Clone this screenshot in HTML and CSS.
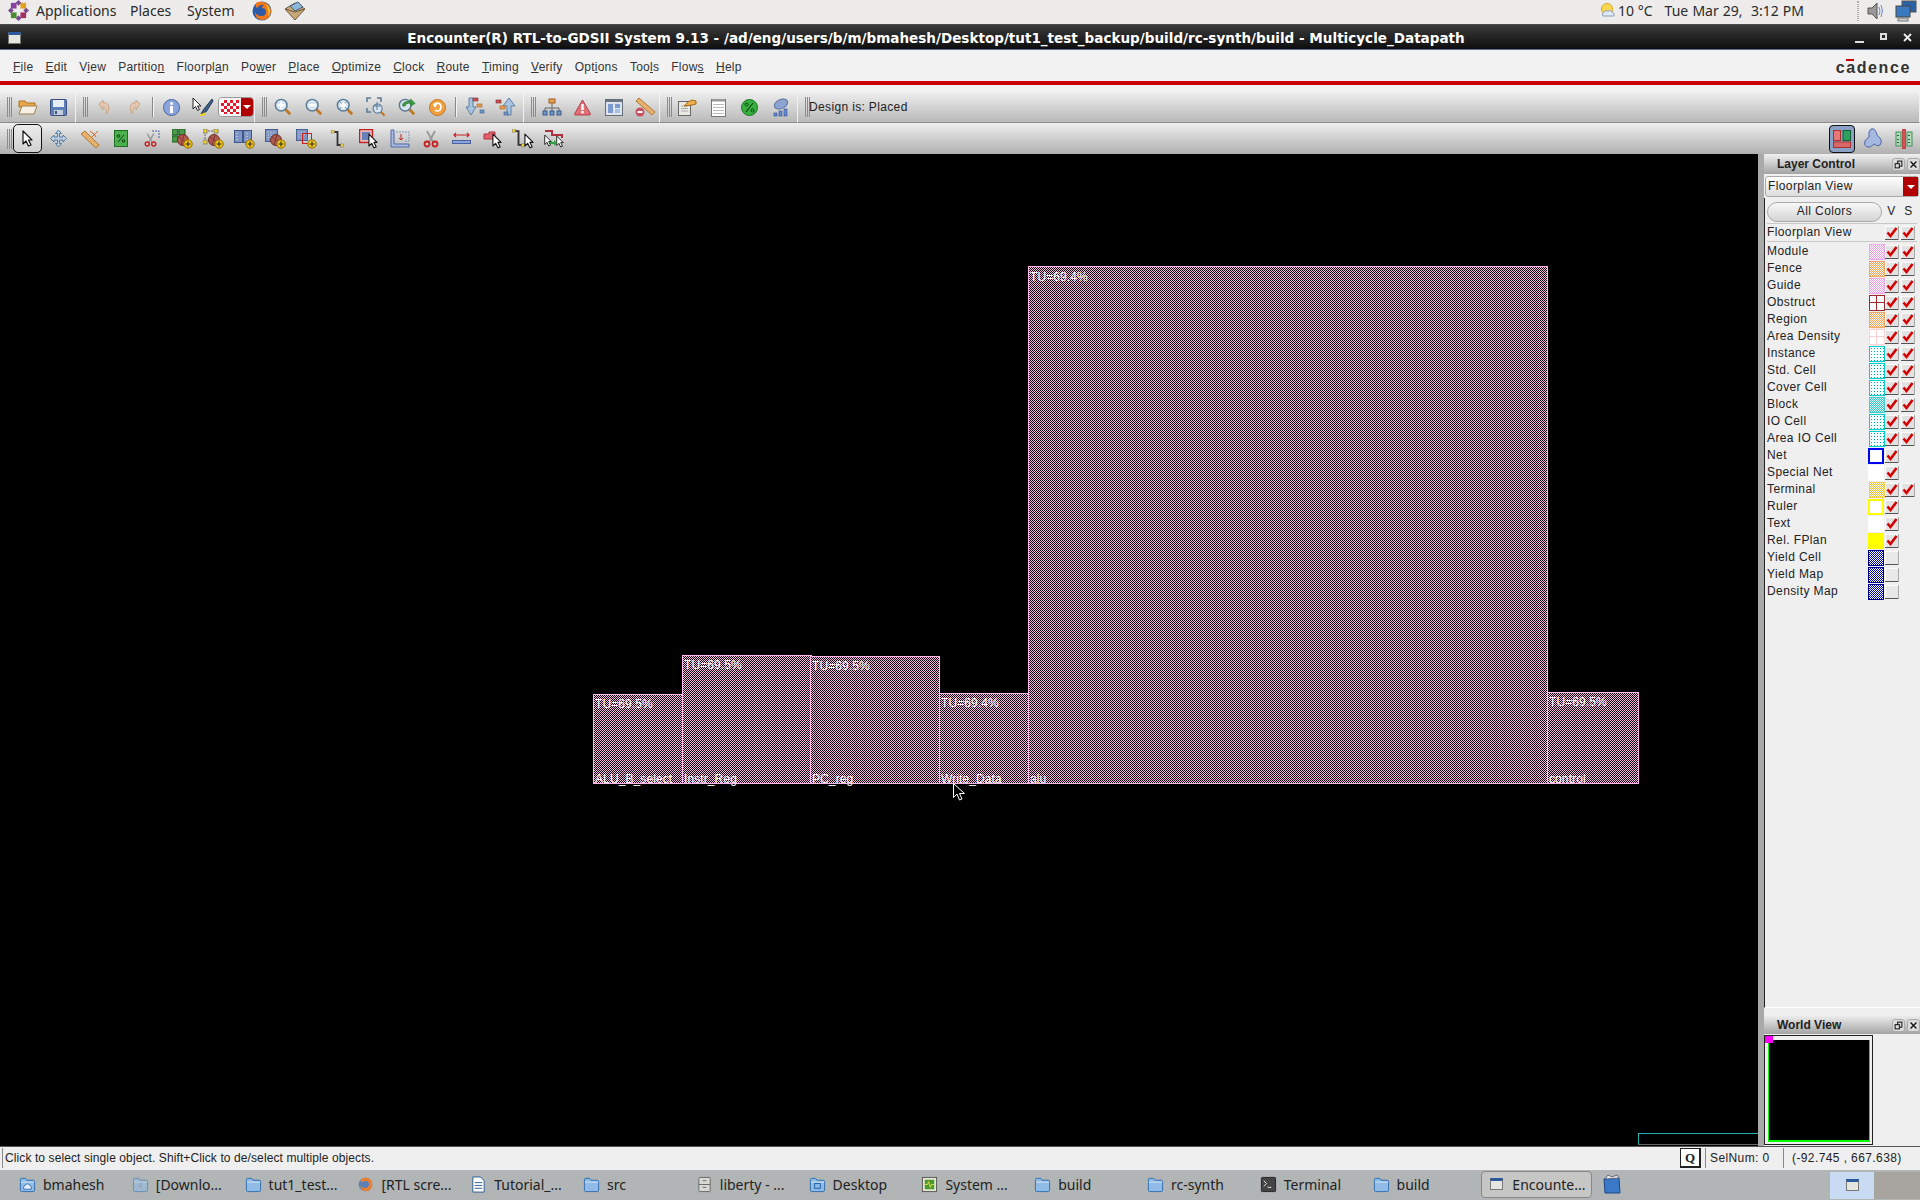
FILE: index.html
```html
<!DOCTYPE html>
<html lang="en">

<head>
    <meta charset="UTF-8">
    <title>Encounter(R) RTL-to-GDSII System 9.13</title>
    <link rel="stylesheet" href="styles.css">
</head>

<body>
    <svg class="defs" width="0" height="0">
        <defs>
            <symbol id="ptr" viewBox="0 0 11 17"><path d="M1 1v13l3-3 2.500 5 2.500-1-2.500-5H10z" fill="#fff" stroke="#111" stroke-width="1.200" stroke-linejoin="round"/></symbol>
            <symbol id="folder" viewBox="0 0 18 18"><path d="M1.500 4q0-1.500 1.500-1.500h4l1.500 2H15q1.500 0 1.500 1.500v9q0 1.500-1.500 1.500H3q-1.500 0-1.500-1.500z" fill="#8fbbe6" stroke="#2f6fb0"/><path d="M2 6.500h14" stroke="#d5e6f6"/></symbol>
            <symbol id="chk" viewBox="0 0 14 14"><rect width="14" height="14" fill="#e2e2e2"/><path d="M0 .5h14M.5 0v14" stroke="#fbfbfb"/><path d="M0 13.500h14" stroke="#555"/><path d="M13.500 0v14" stroke="#aaa"/><path d="M2.500 6.500l3 3.500 6-8" fill="none" stroke="#d40000" stroke-width="2.600"/></symbol>
            <symbol id="nochk" viewBox="0 0 14 14"><rect width="14" height="14" fill="#e8e8e8"/><path d="M0 .5h14M.5 0v14" stroke="#fbfbfb"/><path d="M0 13.500h14" stroke="#555"/><path d="M13.500 0v14" stroke="#aaa"/></symbol>
            <symbol id="mag" viewBox="0 0 20 20"><path d="M12 12l6 6" stroke="#c07820" stroke-width="3"/><circle cx="8" cy="8" r="6.500" fill="#d6e4f0" stroke="#5a7a96" stroke-width="1.600"/></symbol>
            <symbol id="plus" viewBox="0 0 10 10"><circle cx="5" cy="5" r="4.200" fill="#f5c518" stroke="#8a6a00"/><path d="M2.500 5h5M5 2.500v5" stroke="#333" stroke-width="1.200"/></symbol>
            <symbol id="ball" viewBox="0 0 12 12"><circle cx="6" cy="6" r="5.500" fill="#b05a50" stroke="#6e3028"/><path d="M2 3l8 6M7 1l-3 10" stroke="#7c3a32"/></symbol>
            <symbol id="scis" viewBox="0 0 16 18"><path d="M4 1l6 11M12 1L6 12" stroke="#999" stroke-width="1.800"/><circle cx="4" cy="14" r="2.500" fill="none" stroke="#c82020" stroke-width="1.800"/><circle cx="12" cy="14" r="2.500" fill="none" stroke="#c82020" stroke-width="1.800"/></symbol>
            <symbol id="grid" viewBox="0 0 14 14"><rect x=".5" y=".5" width="13" height="13" fill="#7f95c4" stroke="#3f5788"/><path d="M3 3h1v1H3zM6 3h1v1H6zM9 3h1v1H9zM3 6h1v1H3zM6 6h1v1H6zM9 6h1v1H9zM3 9h1v1H3zM6 9h1v1H6z" fill="#e6ecf6"/></symbol>
            <symbol id="wire" viewBox="0 0 12 18"><path d="M2 2h4v13h4" fill="none" stroke="#333" stroke-width="1.800"/><rect x="0" y="0" width="3" height="3" fill="#f0d040" stroke="#776"  stroke-width=".5"/><rect x="9" y="14" width="3" height="3" fill="#f0d040" stroke="#776" stroke-width=".5"/></symbol>
            <symbol id="drest" viewBox="0 0 13 13"><rect x="5.500" y="2.500" width="5" height="6" fill="none" stroke="#111" stroke-width="1.200"/><rect x="2.500" y="5.500" width="5" height="5" fill="#ddd" stroke="#111" stroke-width="1.200"/></symbol>
            <symbol id="dclose" viewBox="0 0 13 13"><path d="M3 3l7 7M10 3l-7 7" stroke="#111" stroke-width="1.500"/></symbol>
        </defs>
    </svg>

    <div class="app">
        <header class="panel">
            <svg class="ic logo" viewBox="0 0 22 22"><path d="M3 3h6v6H3z" fill="#8a3fa0"/><path d="M13 3h6v6h-6z" fill="#e0a020"/><path d="M3 13h6v6H3z" fill="#4a8a30"/><path d="M13 13h6v6h-6z" fill="#a03060"/><path d="M11 0l3 3-3 3-3-3zM11 16l3 3-3 3-3-3zM0 11l3-3 3 3-3 3zM16 11l3-3 3 3-3 3z" fill="#7a4a90"/></svg>
            <span class="panel-app">Applications</span>
            <span class="panel-places">Places</span>
            <span class="panel-system">System</span>
            <svg class="ic ffx" viewBox="0 0 20 20"><circle cx="10" cy="10" r="9.500" fill="#2a5aa8"/><path d="M4 2q-1 4 1 5 3-4 7-3-2 1-2 3 4 0 4 4 0 4-5 4-4 0-6-4 0 7 7 8 8 0 9-8 0-7-7-10Q6 0 4 2z" fill="#f07818"/><path d="M14 3q4 3 4 7 0 3-2 5 1-6-2-12z" fill="#f8c030"/></svg>
            <svg class="ic pkg" viewBox="0 0 22 20"><path d="M1 8l10-6 10 6-10 11z" fill="#c8a878" stroke="#6e5a3c"/><path d="M6 5l8-4 5 5-8 4z" fill="#8fb8d8" stroke="#4a5a6a"/><path d="M1 8l10 3 10-3" fill="none" stroke="#6e5a3c"/></svg>

            <svg class="ic weather" viewBox="0 0 16 16"><circle cx="7" cy="6" r="5.500" fill="#f8d850" stroke="#d8a820"/><path d="M3 13q-2-3 1-4 1-2 4-1 3-1 4 1 3 1 2 4z" fill="#dfe8f4" stroke="#8aa0bc"/></svg>
            <span class="panel-temp">10 °C</span>
            <span class="panel-clock">Tue Mar 29,&nbsp; 3:12 PM</span>
            <span class="panel-grip"></span>
            <svg class="ic vol" viewBox="0 0 18 18"><path d="M1 6h4l5-5v16l-5-5H1z" fill="#999" stroke="#555"/><path d="M12 5q2 4 0 8M14 3q3 6 0 12" fill="none" stroke="#6a8ac0"/></svg>
            <svg class="ic net" viewBox="0 0 22 22"><rect x="7" y="1" width="14" height="11" fill="#2a62a8" stroke="#555"/><rect x="1" y="6" width="14" height="11" fill="#3a7ac0" stroke="#444"/><rect x="3" y="18" width="10" height="3" fill="#ccc" stroke="#777"/></svg>
        </header>

        <div class="titlebar">
            <span class="win-ic"></span>
            <span class="title">Encounter(R) RTL-to-GDSII System 9.13 - /ad/eng/users/b/m/bmahesh/Desktop/tut1_test_backup/build/rc-synth/build - Multicycle_Datapath</span>
            <span class="win-min"></span>
            <span class="win-max"></span>
            <svg class="win-close" viewBox="0 0 9 9"><path d="M1 1l7 7M8 1L1 8" stroke="#eee" stroke-width="1.800"/></svg>
        </div>

        <nav class="menubar">
            <span><u>F</u>ile</span>
            <span><u>E</u>dit</span>
            <span>V<u>i</u>ew</span>
            <span>Partitio<u>n</u></span>
            <span>Floorpl<u>a</u>n</span>
            <span>Po<u>w</u>er</span>
            <span><u>P</u>lace</span>
            <span><u>O</u>ptimize</span>
            <span><u>C</u>lock</span>
            <span><u>R</u>oute</span>
            <span><u>T</u>iming</span>
            <span><u>V</u>erify</span>
            <span>Opt<u>i</u>ons</span>
            <span>Too<u>l</u>s</span>
            <span>Flow<u>s</u></span>
            <span><u>H</u>elp</span>
            <span class="cadence">c<b class="cad-a">a</b>dence</span>
        </nav>

        <div class="toolbar tb-top">
            <div class="tgroup g1">
                <i class="grip"></i>
                <span class="tool"><svg width="20" height="18" viewBox="0 0 20 18"><path d="M1 3h6l2 2h8v4H1z" fill="#e8a848" stroke="#b07020"/><path d="M1 16l3-8h15l-3 8z" fill="#f6efe4" stroke="#a08050"/></svg></span>
                <span class="tool"><svg width="17" height="17" viewBox="0 0 17 17"><rect x=".5" y=".5" width="16" height="16" rx="1" fill="#5f7fb8" stroke="#3a4f7c"/><rect x="3" y="1" width="11" height="7" fill="#e8eef8"/><rect x="4" y="11" width="9" height="5" fill="#c4cede"/><rect x="5" y="12" width="2" height="3" fill="#3a4f7c"/></svg></span>
            </div>
            <div class="tgroup g2">
                <i class="grip"></i>
                <span class="tool"><svg width="12" height="16" viewBox="0 0 12 16"><path d="M1 5l4-4v2.500q6 0 6 6 0 3-3 5.500 1-3 0-5-1-2-3-2V11z" fill="#e2c8b0" stroke="#c8a888"/></svg></span>
                <span class="tool"><svg width="12" height="16" viewBox="0 0 12 16"><path d="M11 5L7 1v2.500q-6 0-6 6 0 3 3 5.500-1-3 0-5 1-2 3-2V11z" fill="#e2c8b0" stroke="#c8a888"/></svg></span>
                <i class="sep"></i>
                <span class="tool"><svg width="17" height="17" viewBox="0 0 17 17"><circle cx="8.500" cy="8.500" r="8" fill="#8aa4dc" stroke="#4a62a0"/><circle cx="8.500" cy="4.500" r="1.500" fill="#fff"/><rect x="7" y="7" width="3" height="7" fill="#fff"/></svg></span>
                <span class="tool"><svg width="22" height="20" viewBox="0 0 22 20"><path d="M1 1v11l2.500-2.500 2 4 2-1-2-3.500H9z" fill="#fff" stroke="#222"/><path d="M20 2l-8 10-3 5 5-2 7-11z" fill="#40608c" stroke="#243850"/><path d="M9 17l-2 2h5l2-4z" fill="#f0d020"/></svg></span>
                <span class="fillbtn"><span class="fill-check"></span><span class="fill-arrow"></span></span>
            </div>
            <div class="tgroup g3">
                <i class="grip"></i>
                <span class="tool"><svg width="18" height="18" viewBox="0 0 20 20"><use href="#mag"/><path d="M4 8h8M8 4v8" stroke="#fff" stroke-width="2.200"/></svg></span>
                <span class="tool"><svg width="18" height="18" viewBox="0 0 20 20"><use href="#mag"/><path d="M4 8h8" stroke="#fff" stroke-width="2.600"/></svg></span>
                <span class="tool"><svg width="18" height="18" viewBox="0 0 20 20"><use href="#mag"/><circle cx="8" cy="8" r="3" fill="#fff"/><path d="M4 4l2 2M12 4l-2 2M4 12l2-2M12 12l-2-2" stroke="#5a7a96"/></svg></span>
                <span class="tool"><svg width="20" height="20" viewBox="0 0 20 20"><path d="M1 5V1h4M11 1h4v4M1 11v4h4" fill="none" stroke="#5a7a96" stroke-width="1.500"/><g transform="translate(6 6) scale(.7)"><use href="#mag" width="20" height="20"/></g><path d="M7 9h8M11 5v8" stroke="#5a7a96"/></svg></span>
                <span class="tool"><svg width="18" height="18" viewBox="0 0 20 20"><use href="#mag"/><path d="M5 9q0-6 8-5l1-3 5 5-5 3v-3q-5-1-6 3z" fill="#3a9a40" stroke="#1e6a24" stroke-width=".6"/></svg></span>
                <span class="tool"><svg width="17" height="17" viewBox="0 0 17 17"><circle cx="8.500" cy="8.500" r="8" fill="#f0a040" stroke="#c87818"/><path d="M4 6h3L5.500 8M5 5.500q3-2.500 6-.5 2 3 0 6-3 2-5 0" fill="none" stroke="#fff" stroke-width="1.600"/></svg></span>
                <i class="sep"></i>
                <span class="tool"><svg width="20" height="20" viewBox="0 0 20 20"><path d="M4 1h4v9h3l-5 8-5-8h3z" fill="#a8c4e0" stroke="#6080a4"/><rect x="8" y="1" width="5" height="3" fill="#c85050" stroke="#803030" stroke-width=".6"/><rect x="12" y="7" width="5" height="3" fill="#e8a050" stroke="#a06020" stroke-width=".6"/><rect x="15" y="13" width="4" height="3" fill="#7098c8" stroke="#3a5a88" stroke-width=".6"/></svg></span>
                <span class="tool"><svg width="22" height="20" viewBox="0 0 22 20"><path d="M12 18h4V9h4L14 1 8 9h4z" fill="#a8c4e0" stroke="#6080a4"/><rect x="1" y="3" width="5" height="3" fill="#c85050" stroke="#803030" stroke-width=".6"/><rect x="5" y="9" width="5" height="3" fill="#e8a050" stroke="#a06020" stroke-width=".6"/><rect x="9" y="15" width="4" height="3" fill="#7098c8" stroke="#3a5a88" stroke-width=".6"/></svg></span>
            </div>
            <div class="tgroup g4">
                <i class="grip"></i>
                <span class="tool"><svg width="20" height="18" viewBox="0 0 20 18"><path d="M10 4v6M3 13v-3h14v3M10 10v3" fill="none" stroke="#666"/><rect x="7" y="1" width="6" height="4" fill="#e8a050" stroke="#a06020"/><rect x="1" y="13" width="4" height="4" fill="#7098c8" stroke="#3a5a88"/><rect x="8" y="13" width="4" height="4" fill="#7098c8" stroke="#3a5a88"/><rect x="15" y="13" width="4" height="4" fill="#7098c8" stroke="#3a5a88"/></svg></span>
                <span class="tool"><svg width="17" height="17" viewBox="0 0 17 17"><path d="M8.500 1L16.500 15q0 1-1 1h-14q-1 0-1-1z" fill="#e07078" stroke="#b04048"/><rect x="7.300" y="5" width="2.400" height="6" fill="#fff"/><rect x="7.300" y="12" width="2.400" height="2.400" fill="#fff"/></svg></span>
                <span class="tool"><svg width="18" height="17" viewBox="0 0 18 17"><rect x=".5" y=".5" width="17" height="16" fill="#dfe4ec" stroke="#666c78"/><rect x="1" y="1" width="16" height="2" fill="#6a7688"/><rect x="3" y="5" width="5" height="9" fill="#7a9ad0"/><rect x="10" y="5" width="5" height="4" fill="#7a9ad0"/><rect x="10" y="10" width="5" height="4" fill="#a8c0e4"/></svg></span>
                <span class="tool"><svg width="20" height="20" viewBox="0 0 20 20"><path d="M4 1l16 14-3 3L1 4z" fill="#e8b070" stroke="#b07830"/><circle cx="5" cy="15" r="4.500" fill="#c85060"/><rect x="2.500" y="14" width="5" height="2" fill="#fff"/></svg></span>
            </div>
            <div class="tgroup g5">
                <i class="grip"></i>
                <span class="tool"><svg width="19" height="17" viewBox="0 0 19 17"><rect x=".5" y="2.500" width="12" height="14" fill="#e8e8e4" stroke="#666"/><path d="M3 7h7M3 9.500h7M3 12h7" stroke="#aaa"/><path d="M6 7l4-4 4-2 4 1v3l-4 1z" fill="#f0b050" stroke="#a06818"/></svg></span>
                <span class="tool"><svg width="15" height="19" viewBox="0 0 15 19"><rect x=".5" y="1.500" width="14" height="17" fill="#fff" stroke="#777"/><rect x="1" y="1" width="13" height="2.500" fill="#999"/><path d="M2 6.500h11M2 9.500h11M2 12.500h11M2 15.500h11" stroke="#bbb"/></svg></span>
                <span class="tool"><svg width="17" height="17" viewBox="0 0 17 17"><circle cx="8.500" cy="8.500" r="8" fill="#38b040" stroke="#1a7820"/><circle cx="5.500" cy="5.500" r="1.500" fill="none" stroke="#0a400e"/><circle cx="11.500" cy="11.500" r="1.500" fill="none" stroke="#0a400e"/><path d="M12 4l-7 9" stroke="#0a400e" stroke-width="1.200"/></svg></span>
                <span class="tool"><svg width="15" height="19" viewBox="0 0 15 19"><ellipse cx="8" cy="6" rx="7" ry="4.500" transform="rotate(-25 8 6)" fill="#8ea4d0" stroke="#5a70a0"/><rect x="1" y="15" width="3" height="3" fill="#6a8ad0" stroke="#2a4a90" stroke-width=".6"/><rect x="6" y="13" width="3" height="5" fill="#6a8ad0" stroke="#2a4a90" stroke-width=".6"/><rect x="11" y="11" width="3" height="7" fill="#6a8ad0" stroke="#2a4a90" stroke-width=".6"/></svg></span>
            </div>
            <div class="tgroup g6">
                <i class="grip"></i>
                <span class="design">Design is: Placed</span>
            </div>
        </div>

        <div class="toolbar tb-edit">
            <i class="grip"></i>
            <span class="slot active"><svg width="11" height="17"><use href="#ptr"/></svg></span>
            <span class="slot"><svg width="19" height="19" viewBox="0 0 19 19"><path d="M9.500 1l3 3.500h-2v3.500h3.500v-2l3.500 3.500-3.500 3.500v-2h-3.500v3.500h2l-3 3.500-3-3.500h2v-3.500H5v2L1.500 9.500 5 6v2h3.500V4.500h-2z" fill="#bcd0e6" stroke="#5a7a9c"/></svg></span>
            <span class="slot"><svg width="20" height="20" viewBox="0 0 20 20"><path d="M1 5l4-3 14 14-3 3z" fill="#e6b070" stroke="#b07830"/><path d="M12 8l6-6M13 4l3 4M10 2l5 4" stroke="#d86820"/></svg></span>
            <span class="slot"><svg width="14" height="17" viewBox="0 0 14 17"><rect x=".5" y=".5" width="13" height="16" fill="#4cb050" stroke="#1a7020"/><circle cx="4.500" cy="6" r="1.300" fill="none" stroke="#0a400e"/><circle cx="9.500" cy="11" r="1.300" fill="none" stroke="#0a400e"/><path d="M10 5l-6 7" stroke="#0a400e"/></svg></span>
            <span class="slot"><svg width="16" height="18" viewBox="0 0 16 18"><path d="M8 1h7v7" fill="none" stroke="#4a60a0" stroke-dasharray="2 1"/><use href="#scis" width="13" height="16" y="2"/></svg></span>
            <span class="slot"><svg width="21" height="20" viewBox="0 0 21 20"><rect x="0" y="0" width="6" height="6" fill="#4a9a4a" stroke="#1a5a1a"/><rect x="7" y="0" width="6" height="6" fill="#4a9a4a" stroke="#1a5a1a"/><rect x="0" y="7" width="6" height="6" fill="#4a9a4a" stroke="#1a5a1a"/><use href="#ball" x="5" y="5" width="12" height="12"/><use href="#plus" x="11" y="10" width="10" height="10"/></svg></span>
            <span class="slot"><svg width="21" height="20" viewBox="0 0 21 20"><path d="M2 2h10M2 2v10" stroke="#666" stroke-dasharray="2 1"/><rect x="0" y="0" width="4" height="4" fill="#f0d020" stroke="#887"/><rect x="11" y="0" width="4" height="4" fill="#f0d020" stroke="#887"/><rect x="0" y="11" width="4" height="4" fill="#f0d020" stroke="#887"/><use href="#ball" x="5" y="5" width="12" height="12"/><use href="#plus" x="11" y="10" width="10" height="10"/></svg></span>
            <span class="slot"><svg width="21" height="20" viewBox="0 0 21 20"><rect x=".5" y="1.500" width="8" height="12" fill="#7f95c4" stroke="#3f5788"/><rect x="9.500" y="1.500" width="8" height="12" fill="#7f95c4" stroke="#3f5788"/><path d="M3 4v1M3 7v1M3 10v1M13 4v1M13 7v1M13 10v1" stroke="#e6ecf6"/><use href="#plus" x="11" y="10" width="10" height="10"/></svg></span>
            <span class="slot"><svg width="21" height="20" viewBox="0 0 21 20"><use href="#grid" width="13" height="13"/><use href="#ball" x="5" y="5" width="12" height="12"/><use href="#plus" x="11" y="10" width="10" height="10"/></svg></span>
            <span class="slot"><svg width="21" height="20" viewBox="0 0 21 20"><use href="#grid" width="12" height="12"/><rect x="6.500" y="4.500" width="9" height="10" fill="none" stroke="#c82020"/><use href="#plus" x="11" y="10" width="10" height="10"/></svg></span>
            <span class="slot"><svg width="13" height="18"><use href="#wire"/></svg></span>
            <span class="slot"><svg width="20" height="20" viewBox="0 0 20 20"><rect x=".5" y=".5" width="13" height="13" fill="#e8b8b8" stroke="#c02020" stroke-width="1.400"/><rect x="3" y="3" width="8" height="8" fill="#6880b8"/><use href="#ptr" x="9" y="4" width="10" height="16"/></svg></span>
            <span class="slot"><svg width="20" height="19" viewBox="0 0 20 19"><path d="M1 1h3v14h15v3H1z" fill="#a8bce0" stroke="#5068a8"/><path d="M6 3h13v9h-5" fill="none" stroke="#8090b8" stroke-dasharray="2 1"/><path d="M11 5v6M9 9l2 2 2-2" fill="none" stroke="#c02020"/></svg></span>
            <span class="slot"><svg width="16" height="18"><use href="#scis"/></svg></span>
            <span class="slot"><svg width="19" height="14" viewBox="0 0 19 14"><path d="M2 3h15M4 1L2 3l2 2M15 1l2 2-2 2" fill="none" stroke="#c82020" stroke-width="1.200"/><rect x=".5" y="8.500" width="18" height="3" fill="#8aa4dc" stroke="#4a62a0"/></svg></span>
            <span class="slot"><svg width="20" height="20" viewBox="0 0 20 20"><path d="M6 1h6v7H1V3h5z" transform="translate(0 2)" fill="#e06070" stroke="#b03040"/><use href="#ptr" x="9" y="4" width="10" height="16"/></svg></span>
            <span class="slot"><svg width="23" height="22" viewBox="0 0 23 22"><use href="#wire" width="13" height="19" y="1"/><use href="#ptr" x="12" y="5" width="10" height="16"/></svg></span>
            <span class="slot"><svg width="21" height="20" viewBox="0 0 21 20"><path d="M1 2h7v4h10v3" fill="none" stroke="#b03040" stroke-width="2"/><use href="#ptr" x="0" y="5" width="8" height="13"/><use href="#ptr" x="12" y="6" width="8" height="13"/><path d="M6 13h4v-2l3 3-3 3v-2H6z" fill="#30a040"/></svg></span>

            <span class="tb-right">
                <span class="slot-r active"><svg width="20" height="20" viewBox="0 0 20 20"><rect width="20" height="20" fill="#8aa0c4"/><rect x="1.500" y="1.500" width="7" height="10" fill="#e87878" stroke="#a83030"/><rect x="11" y="1.500" width="7.500" height="10" fill="#30a060" stroke="#106030"/><rect x="1.500" y="13" width="17" height="5.500" fill="#d86868" stroke="#a83030"/></svg></span>
                <span class="slot-r"><svg width="20" height="21" viewBox="0 0 20 21"><path d="M8 1q4-1 5 3t4 6q3 4 0 7-3 2-6-1-3 4-7 3-4-2-2-6 2-3 4-4Q5 3 8 1z" fill="#a4b8e0" stroke="#5068a8"/></svg></span>
                <span class="slot-r"><svg width="18" height="20" viewBox="0 0 18 20"><rect x="1" y="3" width="5" height="14" fill="#b0d8b8" stroke="#409058"/><rect x="12" y="3" width="5" height="14" fill="#b0d8b8" stroke="#409058"/><rect x="7.500" y="0" width="3" height="20" fill="#d85050" stroke="#a02020" stroke-width=".6"/><path d="M3 6v1M3 10v1M3 13v1M14 6v1M14 10v1M14 13v1" stroke="#2a6a3a" stroke-width="2"/></svg></span>
            </span>
        </div>

        <div class="workarea">
            <div class="canvas">
                <div class="blk blk-alub"><span class="tu">TU=69.5%</span><span class="nm">ALU_B_select</span></div>
                <div class="blk blk-instr"><span class="tu">TU=69.5%</span><span class="nm">Instr_Reg</span></div>
                <div class="blk blk-pc"><span class="tu">TU=69.5%</span><span class="nm">PC_reg</span></div>
                <div class="blk blk-write"><span class="tu">TU=69.4%</span><span class="nm">Write_Data</span></div>
                <div class="blk blk-alu"><span class="tu">TU=69.4%</span><span class="nm">alu</span></div>
                <div class="blk blk-ctrl"><span class="tu">TU=69.5%</span><span class="nm">control</span></div>
                <svg class="cursor" width="13" height="18" viewBox="0 0 13 18"><path d="M.5.5v14l3.500-3.500 2.500 6 2.500-1-2.500-5.500h5z" fill="#000" stroke="#fff"/></svg>
                <div class="teal-box"></div>
            </div>

            <aside class="dock">
                <div class="dock-title"><span>Layer Control</span><svg class="dock-btn"><use href="#drest"/></svg><svg class="dock-btn"><use href="#dclose"/></svg></div>
                <div class="combo"><span>Floorplan View</span><span class="combo-arrow"></span></div>
                <div class="layers">
                    <div class="layers-head">
                        <span class="allcolors">All Colors</span>
                        <span class="vs">V</span>
                        <span class="vs">S</span>
                    </div>
                    <div class="row row-main"><span>Floorplan View</span><i></i><svg class="cb"><use href="#chk"/></svg><svg class="cb"><use href="#chk"/></svg></div>
                    <div class="row"><span>Module</span><i class="sw pink"></i><svg class="cb"><use href="#chk"/></svg><svg class="cb"><use href="#chk"/></svg></div>
                    <div class="row"><span>Fence</span><i class="sw orange"></i><svg class="cb"><use href="#chk"/></svg><svg class="cb"><use href="#chk"/></svg></div>
                    <div class="row"><span>Guide</span><i class="sw pink"></i><svg class="cb"><use href="#chk"/></svg><svg class="cb"><use href="#chk"/></svg></div>
                    <div class="row"><span>Obstruct</span><i class="sw cross-red"></i><svg class="cb"><use href="#chk"/></svg><svg class="cb"><use href="#chk"/></svg></div>
                    <div class="row"><span>Region</span><i class="sw orange"></i><svg class="cb"><use href="#chk"/></svg><svg class="cb"><use href="#chk"/></svg></div>
                    <div class="row"><span>Area Density</span><i class="sw cross-pink"></i><svg class="cb"><use href="#chk"/></svg><svg class="cb"><use href="#chk"/></svg></div>
                    <div class="row"><span>Instance</span><i class="sw dots"></i><svg class="cb"><use href="#chk"/></svg><svg class="cb"><use href="#chk"/></svg></div>
                    <div class="row"><span>Std. Cell</span><i class="sw dots"></i><svg class="cb"><use href="#chk"/></svg><svg class="cb"><use href="#chk"/></svg></div>
                    <div class="row"><span>Cover Cell</span><i class="sw dots"></i><svg class="cb"><use href="#chk"/></svg><svg class="cb"><use href="#chk"/></svg></div>
                    <div class="row"><span>Block</span><i class="sw teal"></i><svg class="cb"><use href="#chk"/></svg><svg class="cb"><use href="#chk"/></svg></div>
                    <div class="row"><span>IO Cell</span><i class="sw dots"></i><svg class="cb"><use href="#chk"/></svg><svg class="cb"><use href="#chk"/></svg></div>
                    <div class="row"><span>Area IO Cell</span><i class="sw dots"></i><svg class="cb"><use href="#chk"/></svg><svg class="cb"><use href="#chk"/></svg></div>
                    <div class="row single"><span>Net</span><i class="sw net-sw"></i><svg class="cb"><use href="#chk"/></svg></div>
                    <div class="row single"><span>Special Net</span><i class="sw plain"></i><svg class="cb"><use href="#chk"/></svg></div>
                    <div class="row"><span>Terminal</span><i class="sw gold"></i><svg class="cb"><use href="#chk"/></svg><svg class="cb"><use href="#chk"/></svg></div>
                    <div class="row single"><span>Ruler</span><i class="sw ruler"></i><svg class="cb"><use href="#chk"/></svg></div>
                    <div class="row single"><span>Text</span><i class="sw plain"></i><svg class="cb"><use href="#chk"/></svg></div>
                    <div class="row single"><span>Rel. FPlan</span><i class="sw yellow"></i><svg class="cb"><use href="#chk"/></svg></div>
                    <div class="row single"><span>Yield Cell</span><i class="sw navy"></i><svg class="cb"><use href="#nochk"/></svg></div>
                    <div class="row single"><span>Yield Map</span><i class="sw navy"></i><svg class="cb"><use href="#nochk"/></svg></div>
                    <div class="row single"><span>Density Map</span><i class="sw navy"></i><svg class="cb"><use href="#nochk"/></svg></div>
                </div>
                <div class="dock-title world-title"><span>World View</span><svg class="dock-btn"><use href="#drest"/></svg><svg class="dock-btn"><use href="#dclose"/></svg></div>
                <div class="world">
                    <div class="world-map"></div>
                    <span class="world-mark"></span>
                </div>
            </aside>
        </div>

        <div class="statusbar">
            <span class="status-msg">Click to select single object. Shift+Click to de/select multiple objects.</span>
            <span class="status-q">Q</span>
            <span class="status-sel">SelNum: 0</span>
            <span class="status-xy">(-92.745 , 667.638)</span>
        </div>

        <footer class="taskbar">
            <div class="task"><svg class="tk" viewBox="0 0 18 18"><use href="#folder"/><path d="M5 11l4-3 4 3v3H5z" fill="#e8f0fa" stroke="#2f6fb0"/></svg>bmahesh</div>
            <div class="task"><svg class="tk dim" viewBox="0 0 18 18"><use href="#folder"/><path d="M9 7v5M7 10l2 2 2-2" fill="none" stroke="#6f97c0"/></svg>[Downlo...</div>
            <div class="task"><svg class="tk"><use href="#folder"/></svg>tut1_test...</div>
            <div class="task"><svg class="tk" viewBox="0 0 20 20"><circle cx="10" cy="10" r="8" fill="#5a80b8"/><path d="M5 3q-1 3 0 5 3-3 6-2 4 1 3 5t-5 3Q5 14 4 10q0 8 7 8 7-1 7-8 0-7-7-8-4 0-6 1z" fill="#e88030"/></svg>[RTL scre...</div>
            <div class="task"><svg class="tk" viewBox="0 0 18 18"><path d="M3 1h8l4 4v12H3z" fill="#fff" stroke="#2a5a90"/><path d="M5 7h8M5 10h8M5 13h8" stroke="#2a5a90"/></svg>Tutorial_...</div>
            <div class="task"><svg class="tk"><use href="#folder"/></svg>src</div>
            <div class="task"><svg class="tk" viewBox="0 0 18 18"><rect x="3" y="1.500" width="12" height="15" rx="1" fill="#d8d8d4" stroke="#666"/><path d="M3 9h12M7 5h4M7 12h4" stroke="#666"/></svg>liberty - ...</div>
            <div class="task"><svg class="tk" viewBox="0 0 18 18"><use href="#folder"/><rect x="6" y="8" width="6" height="5" fill="none" stroke="#1f5fa0"/></svg>Desktop</div>
            <div class="task"><svg class="tk" viewBox="0 0 18 18"><rect x="1.500" y="1.500" width="15" height="15" fill="#e4e8d0" stroke="#555"/><rect x="4" y="4" width="10" height="10" fill="#4a9a30"/><path d="M4 9h3l1-3 2 6 1-3h3" fill="none" stroke="#e8e040"/></svg>System ...</div>
            <div class="task"><svg class="tk"><use href="#folder"/></svg>build</div>
            <div class="task"><svg class="tk"><use href="#folder"/></svg>rc-synth</div>
            <div class="task"><svg class="tk" viewBox="0 0 18 18"><rect x="1.500" y="1.500" width="15" height="15" rx="1" fill="#444" stroke="#222"/><path d="M4 5l3 3-3 3M8 12h4" fill="none" stroke="#eee"/></svg>Terminal</div>
            <div class="task"><svg class="tk"><use href="#folder"/></svg>build</div>
            <div class="task task-on"><span class="win-ic"></span>Encounte...</div>
            <svg class="trash" viewBox="0 0 20 20"><path d="M2 5l15-1 1 15H3z" fill="#3a78c8" stroke="#1a4888"/><path d="M3 5l3-4 4 2 5-2 2 3z" fill="#e8eef8" stroke="#667"/></svg>
            <div class="switcher"><span class="ws-on"><span class="win-ic"></span></span><span class="ws-off"></span></div>
        </footer>
    </div>
</body>

</html>
```

FILE: styles.css
```css
* {
    box-sizing: border-box;
}

html,
body {
    margin: 0;
    height: 100%;
    overflow: hidden;
}

body {
    font: 12px/1.2 "Liberation Sans", Arial, sans-serif;
    color: #222;
    background: #000;
}

.defs {
    position: absolute;
}

.app {
    display: flex;
    flex-direction: column;
    height: 1200px;
    width: 1920px;
}

/* gnome panel */
.panel {
    display: flex;
    align-items: center;
    height: 25px;
    flex: none;
    padding-bottom: 3px;
    background: #edecea;
    border-bottom: 1px solid #4a4a4a;
    font: 14px "Noto Sans", sans-serif;
    color: #2a2a2a;
}

.ic {
    flex: none;
    display: block;
}

.logo {
    width: 21px;
    height: 21px;
    margin-left: 8px;
}

.panel-app {
    margin-left: 7px;
}

.panel-places {
    position: absolute;
    left: 130px;
}

.panel-system {
    position: absolute;
    left: 187px;
}

.ffx {
    width: 20px;
    height: 20px;
    margin-left: 136px;
}

.pkg {
    width: 22px;
    height: 20px;
    margin-left: 12px;
}

.weather {
    width: 16px;
    height: 16px;
    margin-left: auto;
}

.panel-temp {
    margin-left: 2px;
}

.panel-clock {
    margin-left: 12px;
    word-spacing: .5px;
}

.panel-grip {
    width: 2px;
    height: 20px;
    margin-left: 53px;
    border-left: 1px dotted #aaa;
    border-right: 1px dotted #aaa;
}

.vol {
    width: 18px;
    height: 18px;
    margin-left: 8px;
}

.net {
    width: 22px;
    height: 22px;
    margin-left: 10px;
    margin-right: 3px;
}

/* window title */
.titlebar {
    position: relative;
    display: flex;
    align-items: center;
    justify-content: center;
    height: 25px;
    flex: none;
    padding-right: 48px;
    padding-top: 1px;
    background: linear-gradient(#3a3a3a, #262626 45%, #0e0e0e);
    border-bottom: 1px solid #56708c;
    color: #fff;
}

.title {
    font: bold 13.560px "DejaVu Sans", sans-serif;
    white-space: nowrap;
}

.win-ic {
    display: block;
    width: 13px;
    height: 12px;
    background: #e6e6e0;
    border: 1px solid #777;
    border-top: 3px solid #2a5a9c;
}

.titlebar > .win-ic {
    position: absolute;
    left: 8px;
    top: 7px;
}

.win-min {
    position: absolute;
    left: 1855px;
    top: 16px;
    width: 9px;
    height: 2px;
    background: #ddd;
}

.win-max {
    position: absolute;
    left: 1880px;
    top: 8px;
    width: 7px;
    height: 7px;
    border: 2px solid #ddd;
}

.win-close {
    position: absolute;
    left: 1903px;
    top: 8px;
    width: 9px;
    height: 9px;
}

/* menu */
.menubar {
    display: flex;
    align-items: center;
    gap: 12.100px;
    height: 31px;
    flex: none;
    padding-left: 13px;
    padding-top: 3px;
    background: #f2f2f2;
    letter-spacing: .25px;
    color: #333;
}

.cadence {
    margin-left: auto;
    margin-right: 9px;
    margin-top: 2px;
    font: bold 16px "Liberation Sans", sans-serif;
    letter-spacing: 1.600px;
    color: #333;
}

.cad-a {
    position: relative;
}

.cad-a::before {
    content: "";
    position: absolute;
    left: 0;
    top: 0;
    width: 8px;
    height: 2px;
    background: #cc0000;
}

/* toolbars */
.toolbar {
    display: flex;
    flex: none;
    background: #f0f0f0;
}

.tb-top {
    height: 42px;
    border-top: 4px solid #cc0000;
    background: linear-gradient(#f2f2f2 7px, #eeeeee 7px, #b9b9b9 37px);
}

.tgroup {
    display: flex;
    align-items: center;
    height: 31px;
    margin-top: 7px;
    padding-left: 7px;
    flex: none;
    border-right: 1px solid #f2f2f2;
    border-bottom: 1px solid #8c8c8c;
}

.g1 { width: 76px; }
.g2 { width: 179px; }
.g3 { width: 269px; }
.g4 { width: 136px; }
.g5 { width: 138px; }
.g6 { flex: 1; }

.grip {
    display: block;
    flex: none;
    width: 5px;
    height: 20px;
    border-left: 1px solid #8c8c8c;
    border-right: 1px solid #8c8c8c;
    background: linear-gradient(90deg, transparent 1px, #8c8c8c 1px, #8c8c8c 2px, transparent 2px);
}

.tool {
    display: flex;
    align-items: center;
    justify-content: center;
    width: 31px;
    flex: none;
}

.sep {
    display: block;
    flex: none;
    width: 6px;
    height: 20px;
    background: linear-gradient(90deg, transparent 2px, #888 2px, #888 3px, #f4f4f4 3px, #f4f4f4 4px, transparent 4px);
}

.fillbtn {
    display: flex;
    width: 36px;
    height: 20px;
    border: 1px solid #999;
    border-radius: 4px;
    overflow: hidden;
    flex: none;
}

.fill-check {
    width: 22px;
    background: repeating-conic-gradient(#e8182c 0 25%, #fff 0 50%) 0 0 / 6px 6px;
    border: 2px solid #f4f4f4;
}

.fill-arrow {
    position: relative;
    flex: 1;
    background: #b00000;
}

.fill-arrow::after,
.combo-arrow::after {
    content: "";
    position: absolute;
    left: 50%;
    top: 50%;
    margin: -2px 0 0 -4px;
    border: 4px solid transparent;
    border-top: 4px solid #fff;
    border-bottom: 0;
}

.design {
    margin-left: -1px;
    letter-spacing: .35px;
}

.tb-edit {
    position: relative;
    align-items: center;
    height: 31px;
    padding-left: 7px;
    background: linear-gradient(#eeeeee, #b0b0b0);
}

.slot {
    display: flex;
    align-items: center;
    justify-content: center;
    flex: none;
    width: 31px;
    height: 29px;
}

.slot.active {
    width: 29px;
    margin: 0 1px 0 1px;
    border: 1px solid #111;
    border-radius: 5px;
    background: linear-gradient(#ececec, #d0d0d0);
}

.tb-right {
    display: flex;
    align-items: center;
    margin-left: auto;
    margin-right: 3px;
    gap: 5px;
}

.slot-r {
    display: flex;
    align-items: center;
    justify-content: center;
    width: 26px;
    height: 28px;
}

.slot-r.active {
    border: 1px solid #111;
    border-radius: 4px;
    background: #8aa0c4;
}

/* design area */
.workarea {
    display: flex;
    height: 992px;
    flex: none;
}

.canvas {
    position: relative;
    flex: none;
    width: 1758px;
    background: #000;
}

.blk {
    position: absolute;
    border: 1px solid #ffb8ec;
    background: repeating-conic-gradient(#ffb4e6 0 25%, #000 0 50%) 0 0 / 2px 2px;
    color: #fff;
    font-size: 12px;
    letter-spacing: .1px;
}

.tu {
    position: absolute;
    left: 1px;
    top: 2px;
}

.nm {
    position: absolute;
    left: 1px;
    bottom: -3px;
    white-space: nowrap;
}

.blk-alub { left: 593px; top: 540px; width: 90px; height: 90px; }
.blk-instr { left: 682px; top: 501px; width: 130px; height: 129px; }
.blk-pc { left: 810px; top: 502px; width: 130px; height: 128px; }
.blk-write { left: 939px; top: 539px; width: 90px; height: 91px; }
.blk-alu { left: 1028px; top: 112px; width: 520px; height: 518px; }
.blk-ctrl { left: 1547px; top: 538px; width: 92px; height: 92px; }

.blk-alu .tu {
    top: 3px;
}

.cursor {
    position: absolute;
    left: 953px;
    top: 629px;
}

.teal-box {
    position: absolute;
    left: 1638px;
    top: 979px;
    width: 120px;
    height: 12px;
    border: 1px solid #20b0b0;
    border-right: 0;
    border-bottom-color: #666;
}

/* right docks */
.dock {
    display: flex;
    flex-direction: column;
    flex: none;
    width: 162px;
    padding-left: 6px;
    background: linear-gradient(90deg, #a9a9a9 6px, #efefef 6px);
    letter-spacing: .4px;
}

.dock-title {
    display: flex;
    align-items: center;
    height: 19px;
    flex: none;
    margin-top: 1px;
    padding-left: 13px;
    gap: 2px;
    font-weight: bold;
    letter-spacing: 0;
    background: linear-gradient(#ececec, #a4a4a4);
}

.dock-title span:first-child {
    flex: 1;
}

.dock-btn {
    display: block;
    flex: none;
    width: 13px;
    height: 13px;
    border-radius: 3px;
    border: 1px solid #aaa;
    background: #dcdcdc;
}

.combo {
    position: relative;
    display: flex;
    align-items: center;
    height: 21px;
    flex: none;
    margin: 2px 1px 0 1px;
    padding-left: 2px;
    background: linear-gradient(#fff, #dcdcdc);
    border: 1px solid #aaa;
    border-radius: 3px;
}

.combo span:first-child {
    flex: 1;
}

.combo-arrow {
    position: relative;
    width: 15px;
    height: 19px;
    background: #b00000;
}

.layers {
    height: 810px;
    margin-top: 1px;
    padding-left: 2px;
    border-left: 1px solid #222;
    border-bottom: 1px solid #fff;
    flex: none;
}

.layers-head {
    display: flex;
    align-items: center;
    height: 26px;
    padding-top: 2px;
    border-bottom: 1px solid #c8c8c8;
    margin-right: 3px;
}

.allcolors {
    display: flex;
    align-items: center;
    justify-content: center;
    width: 115px;
    height: 20px;
    border: 1px solid #aaa;
    border-radius: 10px;
    background: linear-gradient(#f8f8f8, #d4d4d4);
}

.vs {
    width: 17px;
    text-align: center;
}

.vs:nth-child(2) {
    margin-left: 1px;
}

.row {
    display: grid;
    grid-template-columns: 102px 15px 16px 14px;
    align-items: center;
    height: 17px;
    white-space: nowrap;
}

.row.single {
    grid-template-columns: 101px 16px 14px;
}

.row .cb {
    margin-left: 1px;
}

.row-main {
    height: 18px;
    margin-bottom: 1px;
    border-bottom: 1px solid #c8c8c8;
    margin-right: 3px;
}

.cb {
    display: block;
    width: 14px;
    height: 14px;
}

.sw {
    display: block;
    width: 16px;
    height: 16px;
    border: 1px solid;
}

.pink {
    border-color: #f0a8ec;
    background: repeating-conic-gradient(#f0a0e8 0 25%, #fff 0 50%) 0 0 / 2px 2px;
}

.orange {
    border-color: #f4a868;
    background: repeating-conic-gradient(#f8a050 0 25%, #fff 0 50%) 0 0 / 2px 2px;
}

.cross-red {
    border-color: #a02828;
    background:
        linear-gradient(#a02828, #a02828) 0 6px / 100% 1px no-repeat,
        linear-gradient(#a02828, #a02828) 6px 0 / 1px 100% no-repeat,
        #fff;
}

.cross-pink {
    border-color: #ffd0d0;
    background:
        linear-gradient(#ffd0d0, #ffd0d0) 0 6px / 100% 1px no-repeat,
        linear-gradient(#ffd0d0, #ffd0d0) 6px 0 / 1px 100% no-repeat,
        #fff;
}

.dots {
    border-color: #00d0d0;
    background: radial-gradient(#00a8a8 .7px, transparent .8px) 0 0 / 3px 3px, #f4ffff;
}

.teal {
    border-color: #40d0d0;
    background: repeating-conic-gradient(#40c8c8 0 25%, #d8f8f8 0 50%) 0 0 / 2px 2px;
}

.net-sw {
    border: 2px solid #0000f0;
    background: #fff;
}

.plain {
    border-color: #fff;
    background: #fff;
}

.gold {
    border-color: #f8d050;
    background: repeating-conic-gradient(#f0c030 0 25%, #fff 0 50%) 0 0 / 2px 2px;
}

.ruler {
    border: 2px solid #ffff00;
    background: #fff;
}

.yellow {
    border-color: #ffff00;
    background: #ffff00;
}

.navy {
    border-color: #000090;
    background: repeating-conic-gradient(#0000a0 0 25%, #fff 0 50%) 0 0 / 2px 2px;
}

.world-title {
    margin-top: 8px;
    height: 18px;
}

.world {
    position: relative;
    width: 109px;
    height: 110px;
    margin-top: 1px;
    border: 1px solid #222;
    padding: 4px 2px 2px 3px;
}

.world-map {
    height: 100%;
    background: #000;
    border-left: 1px solid #00ff00;
    border-right: 1px solid #00ff00;
    border-bottom: 2px solid #00ff00;
}

.world-mark {
    position: absolute;
    left: 0;
    top: 0;
    width: 8px;
    height: 7px;
    background: #ff00ff;
}

/* status */
.statusbar {
    display: flex;
    align-items: center;
    height: 24px;
    flex: none;
    padding-left: 2px;
    padding-bottom: 2px;
    background: #efefef;
    border-top: 1px solid #555;
    letter-spacing: .1px;
}

.status-msg {
    width: 1678px;
    padding-left: 2px;
    border-left: 1px solid #888;
    line-height: 20px;
}

.status-q {
    width: 21px;
    height: 20px;
    text-align: center;
    font: bold 13px/18px "Liberation Serif", serif;
    background: #fff;
    border: 1px solid #222;
    border-right-width: 2px;
    border-bottom-width: 2px;
}

.status-sel {
    width: 78px;
    margin-left: 4px;
    padding-left: 4px;
    border-left: 1px solid #888;
    line-height: 20px;
    letter-spacing: .4px;
}

.status-xy {
    flex: 1;
    padding-left: 8px;
    border-left: 1px solid #888;
    line-height: 20px;
    letter-spacing: .4px;
}

/* taskbar */
.taskbar {
    position: relative;
    display: flex;
    align-items: center;
    height: 30px;
    flex: none;
    padding-left: 19px;
    padding-bottom: 2px;
    background: #b1b5b6;
    font: 14px "Noto Sans", sans-serif;
    color: #222;
}

.task {
    display: flex;
    align-items: center;
    gap: 7px;
    width: 112.800px;
    flex: none;
    white-space: nowrap;
}

.tk {
    display: block;
    width: 17px;
    height: 17px;
    flex: none;
}

.dim {
    opacity: .55;
}

.task-on {
    width: 111px;
    height: 27px;
    margin-left: -4px;
    padding-left: 8px;
    gap: 9px;
    border: 1px solid #888;
    border-radius: 4px;
    background: #c6c6c4;
}

.trash {
    width: 20px;
    height: 22px;
    margin-left: 10px;
    flex: none;
}

.switcher {
    display: flex;
    height: 27px;
    margin-left: auto;
    margin-top: 2px;
}

.ws-on {
    display: flex;
    align-items: center;
    justify-content: center;
    width: 44px;
    background: #c9dbf2;
}

.ws-off {
    width: 46px;
    background: #a8a4a0;
}
```
